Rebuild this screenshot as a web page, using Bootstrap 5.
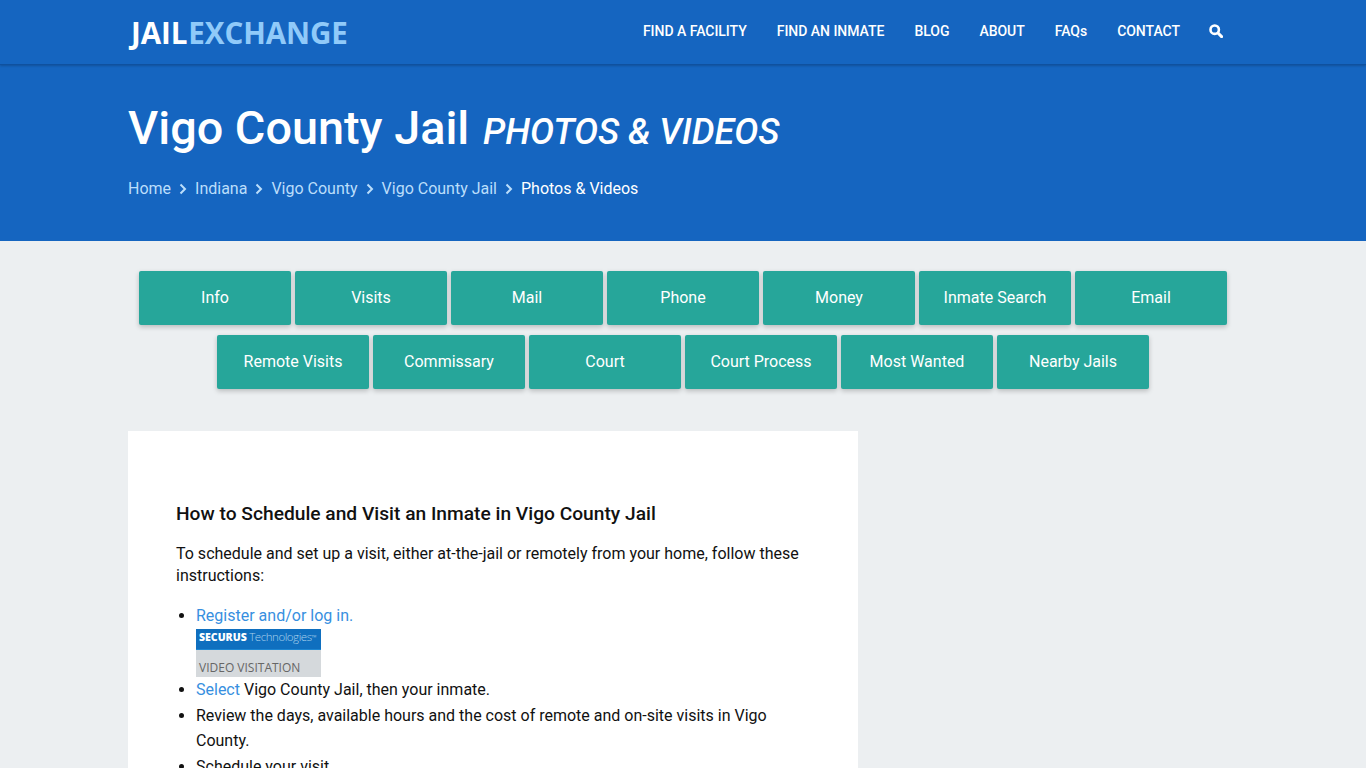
<!DOCTYPE html>
<html lang="en">
<head>
  <meta charset="UTF-8">
  <title>Vigo County Jail Photos &amp; Videos</title>
  <link href="https://cdn.jsdelivr.net/npm/bootstrap@5.3.0/dist/css/bootstrap.min.css" rel="stylesheet">
  <style>
    html, body { height: 768px; overflow: hidden; }
    body { background: #eceff1; font-family: Roboto, sans-serif; color: #111; font-size: 16px; }
    .wrap { width: 1140px; padding: 0 15px; margin: 0 auto; }
    .topbar { background: #1565c0; height: 65px; border-bottom: 1px solid #0f519f; box-shadow: 0 1px 2px rgba(0,0,0,.2); position: relative; }
    .topbar .wrap { height: 64px; }
    .logo { font-family: "Open Sans", sans-serif; font-weight: 700; font-size: 29.6px; letter-spacing: -.1px; color: #fff; text-decoration: none; line-height: 1; padding-left: 3px; margin-top: 2px; }
    .logo span { color: #90caf9; margin-left: 1px; }
    .top-links { gap: 30px; margin-top: -2px; }
    .top-links a { color: #fff; text-decoration: none; font-size: 14px; font-weight: 500; line-height: 20px; letter-spacing: -.03px; }
    .top-links svg { display: block; margin-left: -1px; margin-right: 15px; }
    .hero { background: #1565c0; height: 176px; padding-top: 35px; }
    .hero h1 { font-size: 46.8px; font-weight: 500; line-height: 57px; color: #fff; margin: 0; }
    .hero h1 em { font-size: 36px; font-weight: 500; margin-left: 2px; }
    .crumbs { gap: 8px; margin-top: 16px; font-size: 16px; line-height: 24px; }
    .crumbs a { color: #bbdefb; text-decoration: none; }
    .crumbs b { color: #fff; font-weight: 400; }
    .tabs { padding-top: 30px; gap: 10px 4px; }
    .tab-btn { width: 152px; height: 54px; background: #26a69a; color: #fff; border-radius: 2px; font-size: 16px; font-weight: 400; line-height: 54px; text-align: center; text-decoration: none; box-shadow: 0 2px 5px rgba(0,0,0,.22); }
    .main-box { width: 730px; background: #fff; margin-top: 42px; padding: 71px 48px 40px; }
    .main-box h2 { font-size: 19.2px; font-weight: 500; line-height: 24px; color: #111; margin: 0 0 17px; }
    .main-box p { line-height: 22px; margin: 0 0 18px; }
    .main-box ul { padding-left: 20px; margin: 0; line-height: 25.5px; }
    .main-box a { color: #378fe0; text-decoration: none; }
    .main-box ul li:nth-child(1) { line-height: 22px; }
    .securus { width: 125px; height: 48px; margin-top: 2px; background: #d5d9dc; color: #666; font-family: "Open Sans", sans-serif; font-size: 12px; line-height: 1; overflow: hidden; }
    .securus-top { height: 21px; background: #0f6fbf; border-bottom: 1px solid #1d86d2; color: #a9cfec; font-size: 11.5px; font-weight: 300; padding: 2px 0 0 3px; letter-spacing: -.45px; white-space: nowrap; }
    .securus-top strong { color: #fff; font-weight: 800; font-size: 10.5px; letter-spacing: 0; }
    .securus-top sup { font-size: 7px; top: -.2em; }
    .securus-low { padding: 12px 0 0 3px; }
  </style>
</head>
<body>

  <div class="topbar">
    <div class="wrap d-flex align-items-center justify-content-between">
      <a class="logo" href="#">JAIL<span>EXCHANGE</span></a>
      <div class="top-links d-flex align-items-center">
        <a href="#">FIND A FACILITY</a>
        <a href="#">FIND AN INMATE</a>
        <a href="#">BLOG</a>
        <a href="#">ABOUT</a>
        <a href="#">FAQs</a>
        <a href="#">CONTACT</a>
        <a href="#" aria-label="Search">
          <svg width="14" height="14" viewBox="0 0 14 14"><circle cx="5.7" cy="5.7" r="4.2" fill="none" stroke="#fff" stroke-width="2.6"/><path d="M9 9l3.6 3.6" stroke="#fff" stroke-width="3" stroke-linecap="round"/></svg>
        </a>
      </div>
    </div>
  </div>

  <div class="hero">
    <div class="wrap">
      <h1>Vigo County Jail <em>PHOTOS &amp; VIDEOS</em></h1>
      <div class="crumbs d-flex align-items-center">
        <a href="#">Home</a>
        <svg width="8" height="12" viewBox="0 0 8 12"><path d="M1.5 1.5L6 6l-4.5 4.5" fill="none" stroke="#bbdefb" stroke-width="2"/></svg>
        <a href="#">Indiana</a>
        <svg width="8" height="12" viewBox="0 0 8 12"><path d="M1.5 1.5L6 6l-4.5 4.5" fill="none" stroke="#bbdefb" stroke-width="2"/></svg>
        <a href="#">Vigo County</a>
        <svg width="8" height="12" viewBox="0 0 8 12"><path d="M1.5 1.5L6 6l-4.5 4.5" fill="none" stroke="#bbdefb" stroke-width="2"/></svg>
        <a href="#">Vigo County Jail</a>
        <svg width="8" height="12" viewBox="0 0 8 12"><path d="M1.5 1.5L6 6l-4.5 4.5" fill="none" stroke="#bbdefb" stroke-width="2"/></svg>
        <b>Photos &amp; Videos</b>
      </div>
    </div>
  </div>

  <div class="wrap">
    <div class="tabs d-flex flex-wrap justify-content-center">
      <a class="tab-btn" href="#">Info</a>
      <a class="tab-btn" href="#">Visits</a>
      <a class="tab-btn" href="#">Mail</a>
      <a class="tab-btn" href="#">Phone</a>
      <a class="tab-btn" href="#">Money</a>
      <a class="tab-btn" href="#">Inmate Search</a>
      <a class="tab-btn" href="#">Email</a>
      <a class="tab-btn" href="#">Remote Visits</a>
      <a class="tab-btn" href="#">Commissary</a>
      <a class="tab-btn" href="#">Court</a>
      <a class="tab-btn" href="#">Court Process</a>
      <a class="tab-btn" href="#">Most Wanted</a>
      <a class="tab-btn" href="#">Nearby Jails</a>
    </div>

    <div class="main-box">
      <h2>How to Schedule and Visit an Inmate in Vigo County Jail</h2>
      <p>To schedule and set up a visit, either at-the-jail or remotely from your home, follow these instructions:</p>
      <ul>
        <li>
          <a href="#">Register and/or log in.</a>
          <div class="securus">
            <div class="securus-top"><strong>SECURUS</strong> Technologies<sup>™</sup></div>
            <div class="securus-low">VIDEO VISITATION</div>
          </div>
        </li>
        <li><a href="#">Select</a> Vigo County Jail, then your inmate.</li>
        <li>Review the days, available hours and the cost of remote and on-site visits in Vigo County.</li>
        <li>Schedule your visit.</li>
      </ul>
    </div>
  </div>

  <script src="https://cdn.jsdelivr.net/npm/bootstrap@5.3.0/dist/js/bootstrap.bundle.min.js"></script>
</body>
</html>
